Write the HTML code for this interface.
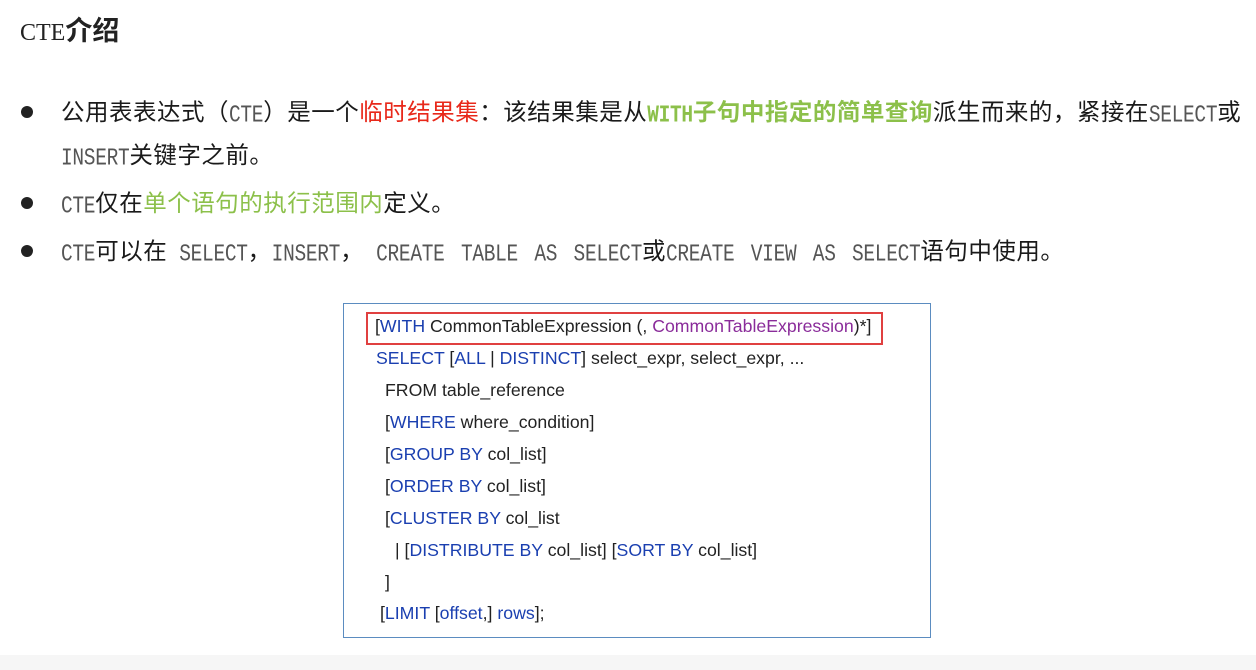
<!DOCTYPE html>
<html><head><meta charset="utf-8"><style>
body{margin:0;width:1256px;height:670px;background:#fff;position:relative;overflow:hidden;font-family:"Liberation Sans","Noto Sans CJK SC",sans-serif;color:#222}
.t{position:absolute;left:20px;top:9px;font-size:27px;font-weight:bold;white-space:nowrap}
.l{position:absolute;left:61px;font-size:23.5px;letter-spacing:0.5px;white-space:nowrap;line-height:30px;color:#1a1a1a}
.b{position:absolute;left:21px;width:12px;height:12px;border-radius:50%;background:#222}
.m{font-family:"Liberation Mono",monospace;font-size:19.5px;color:#555;letter-spacing:-0.3px;transform:scaleY(1.25);display:inline-block}
.r{color:#e8281a}.g{color:#8cc04a}.gb{color:#8cc04a;font-weight:bold}
.box{position:absolute;left:343px;top:303px;width:586px;height:333px;border:1px solid #5b8cc0}
.c{position:absolute;font-size:17.7px;white-space:nowrap;color:#222}
.k{color:#1a3fb0}.p{color:#8a2c9a}
.red{position:absolute;left:366px;top:312px;width:513px;height:29px;border:2px solid #e04040}
.bot{position:absolute;left:0;top:655px;width:1256px;height:15px;background:#f6f6f6}
</style></head><body>
<div class="t"><span style="font-family:'Liberation Serif',serif;font-weight:normal;font-size:24px">CTE</span>介绍</div>
<div class="b" style="top:106px"></div>
<div class="l" style="top:97px">公用表表达式（<span class="m">CTE</span>）是一个<span class="r">临时结果集</span>：该结果集是从<span class="gb"><span class="m" style="color:#8cc04a;font-weight:bold">WITH</span>子句中指定的简单查询</span>派生而来的，紧接在<span class="m">SELECT</span>或</div>
<div class="l" style="top:140px"><span class="m">INSERT</span>关键字之前。</div>
<div class="b" style="top:197px"></div>
<div class="l" style="top:188px"><span class="m">CTE</span>仅在<span class="g">单个语句的执行范围内</span>定义。</div>
<div class="b" style="top:245px"></div>
<div class="l" style="top:236px;word-spacing:5px"><span class="m">CTE</span>可以在 <span class="m">SELECT</span>，<span class="m">INSERT</span>， <span class="m">CREATE TABLE AS SELECT</span>或<span class="m">CREATE VIEW AS SELECT</span>语句中使用。</div>
<div class="box"></div>
<div class="red"></div>
<div class="c" style="left:375px;top:316px">[<span class="k">WITH</span> CommonTableExpression (, <span class="p">CommonTableExpression</span>)*]</div>
<div class="c" style="left:376px;top:348px"><span class="k">SELECT</span> [<span class="k">ALL</span> | <span class="k">DISTINCT</span>] select_expr, select_expr, ...</div>
<div class="c" style="left:385px;top:380px">FROM table_reference</div>
<div class="c" style="left:385px;top:412px">[<span class="k">WHERE</span> where_condition]</div>
<div class="c" style="left:385px;top:444px">[<span class="k">GROUP BY</span> col_list]</div>
<div class="c" style="left:385px;top:476px">[<span class="k">ORDER BY</span> col_list]</div>
<div class="c" style="left:385px;top:508px">[<span class="k">CLUSTER BY</span> col_list</div>
<div class="c" style="left:395px;top:540px">| [<span class="k">DISTRIBUTE BY</span> col_list] [<span class="k">SORT BY</span> col_list]</div>
<div class="c" style="left:385px;top:572px">]</div>
<div class="c" style="left:380px;top:603px">[<span class="k">LIMIT</span> [<span class="k">offset</span>,] <span class="k">rows</span>];</div>
<div class="bot"></div>
</body></html>
